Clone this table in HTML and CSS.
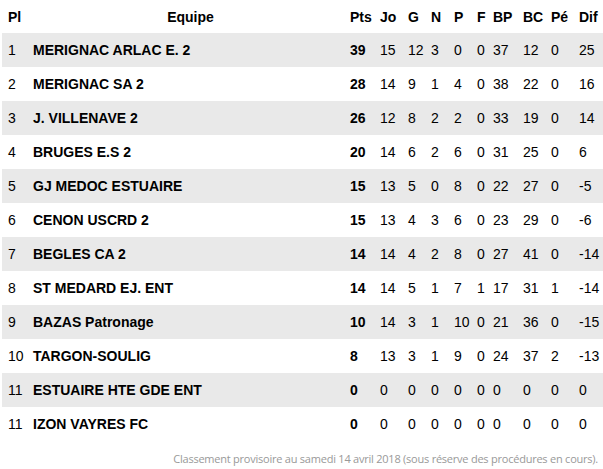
FILE: index.html
```html
<!DOCTYPE html>
<html lang="fr">
<head>
<meta charset="utf-8">
<link rel="stylesheet" href="styles.css">
</head>
<body>
<div class="ranking">
  <div class="row head">
    <div>Pl</div><div class="team">Equipe</div><div>Pts</div><div>Jo</div><div>G</div><div>N</div><div>P</div><div>F</div><div>BP</div><div>BC</div><div>Pé</div><div>Dif</div>
  </div>
  <div class="row alt"><div>1</div><div class="team">MERIGNAC ARLAC E. 2</div><div class="pts">39</div><div>15</div><div>12</div><div>3</div><div>0</div><div>0</div><div>37</div><div>12</div><div>0</div><div>25</div></div>
  <div class="row"><div>2</div><div class="team">MERIGNAC SA 2</div><div class="pts">28</div><div>14</div><div>9</div><div>1</div><div>4</div><div>0</div><div>38</div><div>22</div><div>0</div><div>16</div></div>
  <div class="row alt"><div>3</div><div class="team">J. VILLENAVE 2</div><div class="pts">26</div><div>12</div><div>8</div><div>2</div><div>2</div><div>0</div><div>33</div><div>19</div><div>0</div><div>14</div></div>
  <div class="row"><div>4</div><div class="team">BRUGES E.S 2</div><div class="pts">20</div><div>14</div><div>6</div><div>2</div><div>6</div><div>0</div><div>31</div><div>25</div><div>0</div><div>6</div></div>
  <div class="row alt"><div>5</div><div class="team">GJ MEDOC ESTUAIRE</div><div class="pts">15</div><div>13</div><div>5</div><div>0</div><div>8</div><div>0</div><div>22</div><div>27</div><div>0</div><div>-5</div></div>
  <div class="row"><div>6</div><div class="team">CENON USCRD 2</div><div class="pts">15</div><div>13</div><div>4</div><div>3</div><div>6</div><div>0</div><div>23</div><div>29</div><div>0</div><div>-6</div></div>
  <div class="row alt"><div>7</div><div class="team">BEGLES CA 2</div><div class="pts">14</div><div>14</div><div>4</div><div>2</div><div>8</div><div>0</div><div>27</div><div>41</div><div>0</div><div>-14</div></div>
  <div class="row"><div>8</div><div class="team">ST MEDARD EJ. ENT</div><div class="pts">14</div><div>14</div><div>5</div><div>1</div><div>7</div><div>1</div><div>17</div><div>31</div><div>1</div><div>-14</div></div>
  <div class="row alt"><div>9</div><div class="team">BAZAS Patronage</div><div class="pts">10</div><div>14</div><div>3</div><div>1</div><div>10</div><div>0</div><div>21</div><div>36</div><div>0</div><div>-15</div></div>
  <div class="row"><div>10</div><div class="team">TARGON-SOULIG</div><div class="pts">8</div><div>13</div><div>3</div><div>1</div><div>9</div><div>0</div><div>24</div><div>37</div><div>2</div><div>-13</div></div>
  <div class="row alt"><div>11</div><div class="team">ESTUAIRE HTE GDE ENT</div><div class="pts">0</div><div>0</div><div>0</div><div>0</div><div>0</div><div>0</div><div>0</div><div>0</div><div>0</div><div>0</div></div>
  <div class="row"><div>11</div><div class="team">IZON VAYRES FC</div><div class="pts">0</div><div>0</div><div>0</div><div>0</div><div>0</div><div>0</div><div>0</div><div>0</div><div>0</div><div>0</div></div>
</div>
<p class="note">Classement provisoire au samedi 14 avril 2018 (sous réserve des procédures en cours).</p>
</body>
</html>
```
FILE: styles.css
```css
html, body {
  margin: 0;
  padding: 0;
  background: #fff;
}
body {
  font-family: "Liberation Sans", Arial, sans-serif;
  font-size: 14px;
  color: #000;
}
.ranking {
  margin-left: 2px;
  width: 601px;
}
.row {
  display: grid;
  grid-template-columns: 25px 317px 30px 28px 23px 23px 23px 16px 30px 28px 28px 1fr;
  align-items: center;
  height: 34px;
  padding-left: 6px;
  white-space: nowrap;
}
.row.head {
  height: 33px;
  font-weight: bold;
}
.row.head .team {
  text-align: center;
  padding-right: 2px;
}
.row.alt {
  background: #e9e9e9;
}
.team, .pts {
  font-weight: bold;
}
.note {
  margin: 10px 5px 0 0;
  text-align: right;
  font-family: "Open Sans", sans-serif;
  font-size: 11px;
  letter-spacing: -0.23px;
  color: #999;
}
```
